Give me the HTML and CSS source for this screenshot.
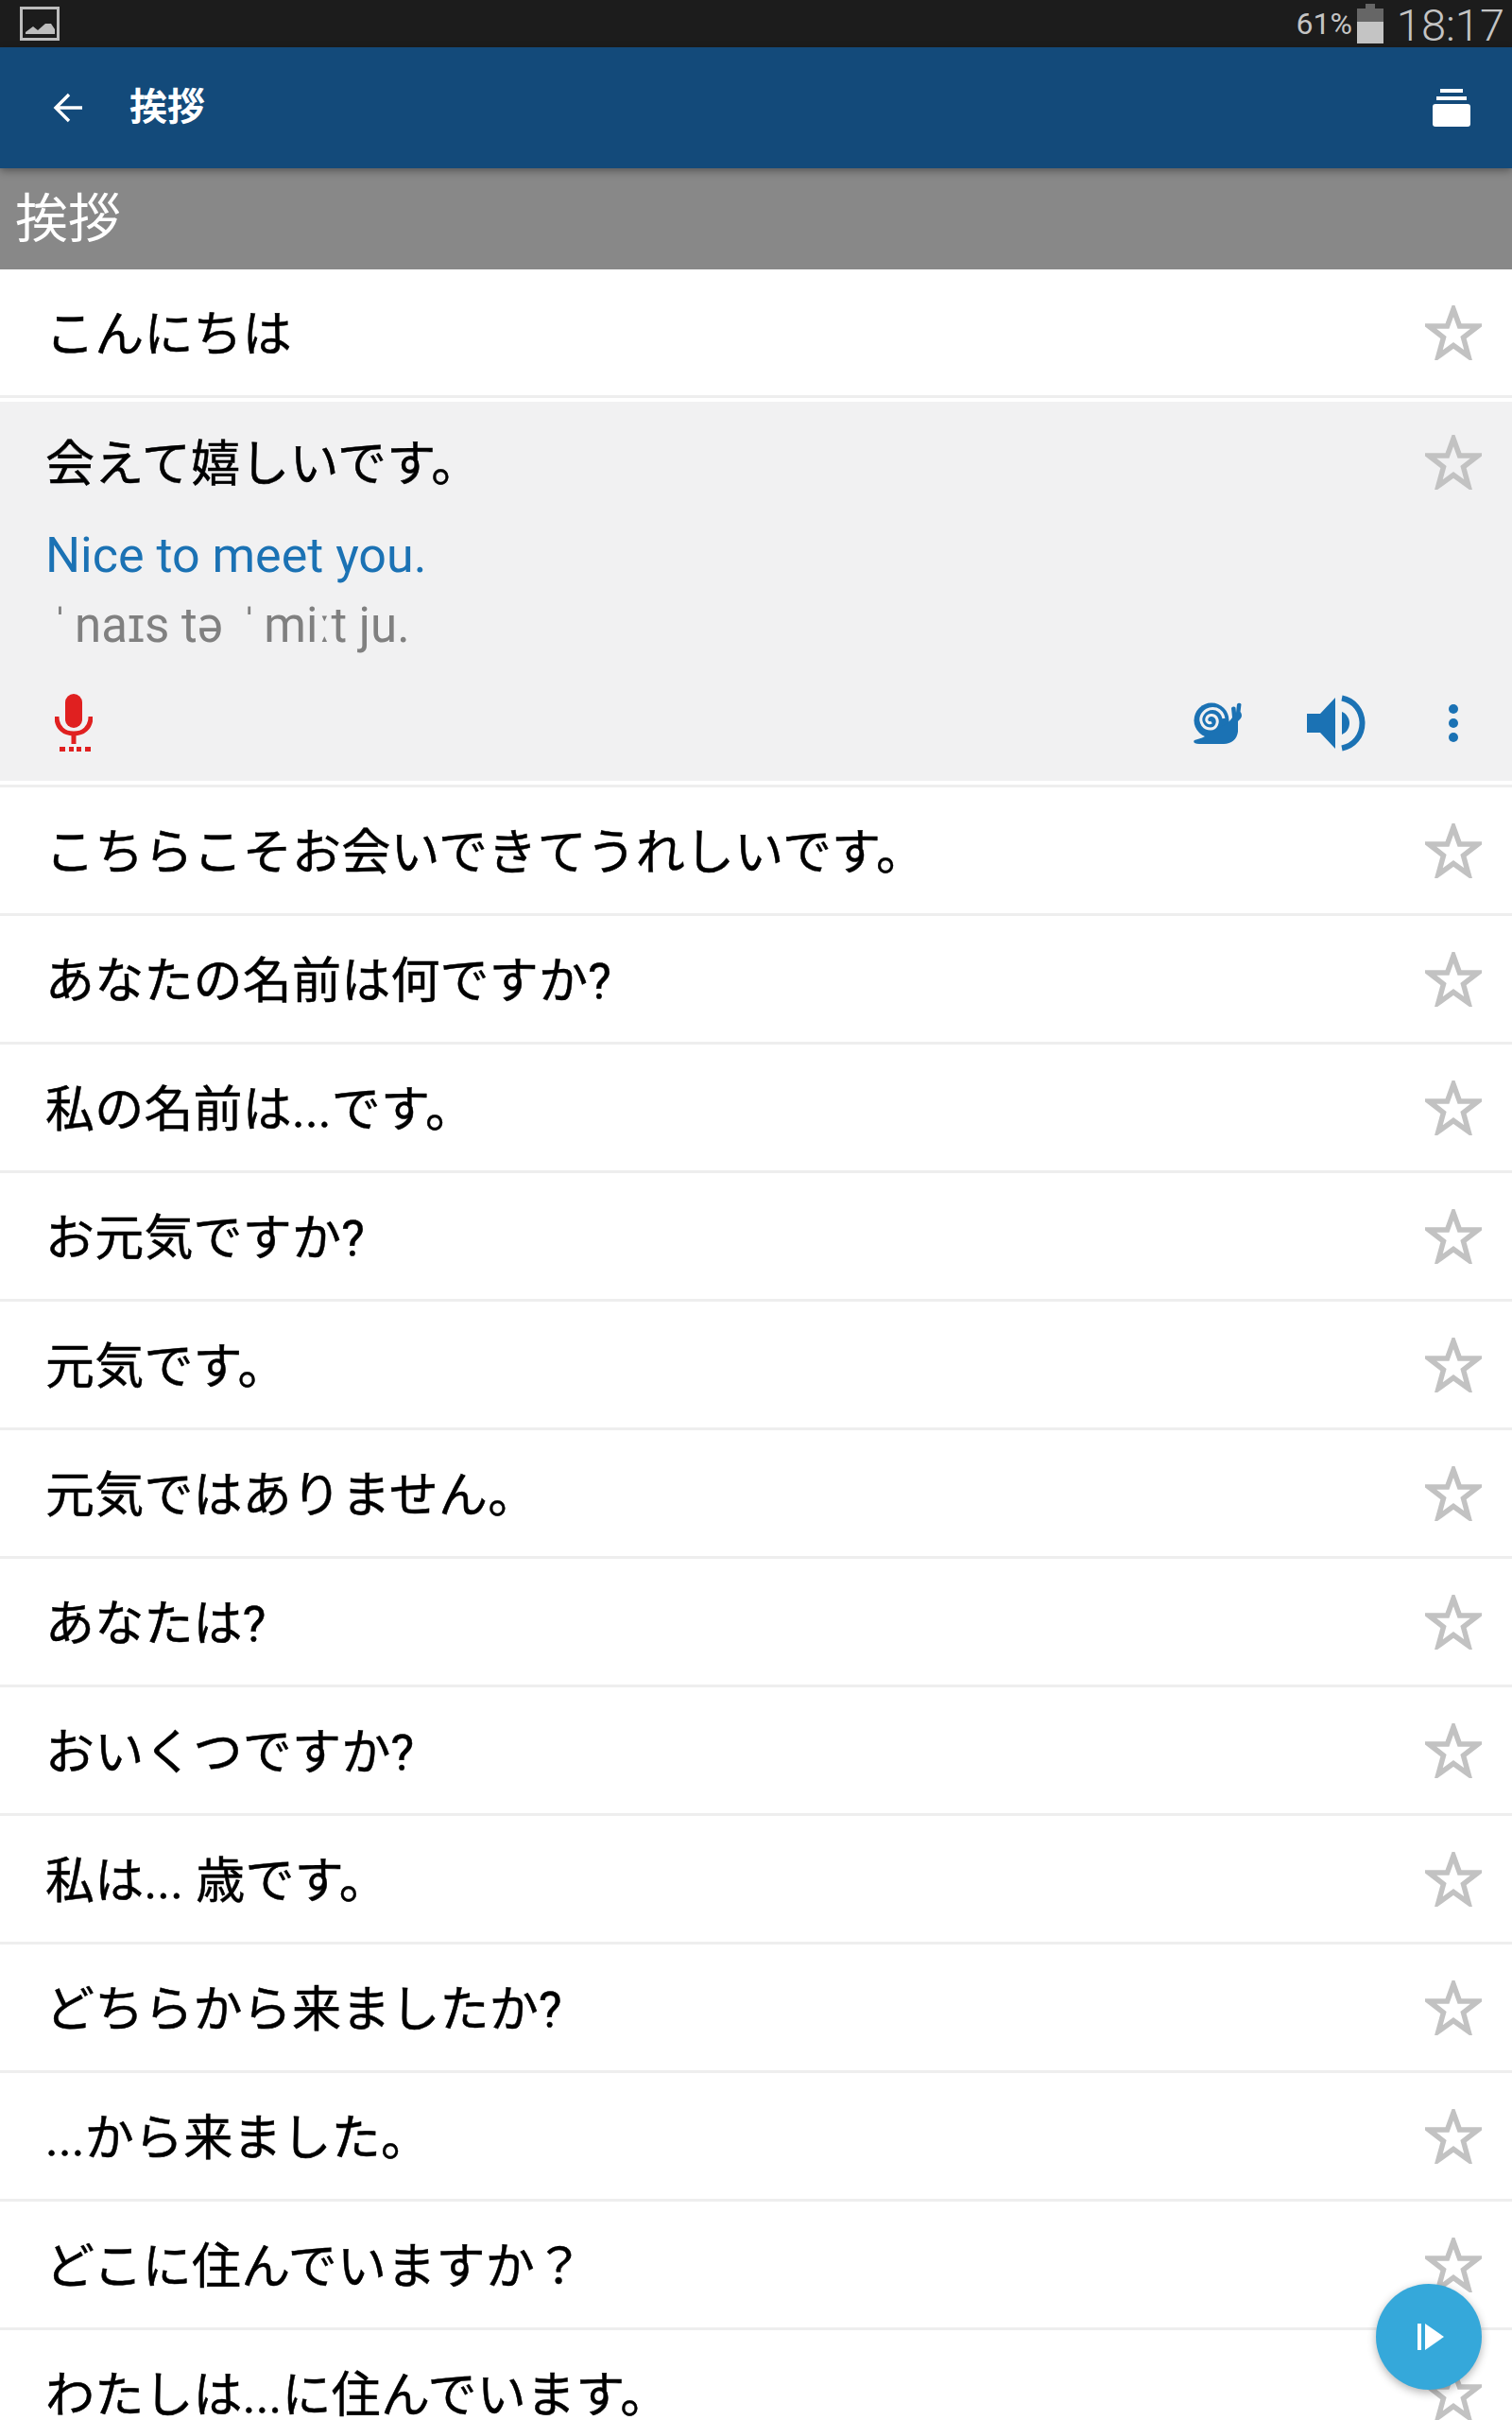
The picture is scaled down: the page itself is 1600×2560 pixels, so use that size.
FILE: index.html
```html
<!DOCTYPE html>
<html lang="ja">
<head>
    <meta charset="UTF-8">
    <meta name="viewport" content="width=device-width, initial-scale=1.0">
    <title>挨拶</title>
    <link rel="stylesheet" href="styles.css">
</head>
<body>
    <div class="screen">
        <div class="status-bar">
            <svg class="status-picture" width="42" height="36" viewBox="0 0 42 36">
                <rect x="1.5" y="1.5" width="39" height="33" fill="none" stroke="#bdbdbd" stroke-width="3"/>
                <path d="M6 29 L6 27 L14 21 L19 25 L27 18 L33 18 L37 24 L37 29 Z" fill="#bdbdbd"/>
            </svg>
            <div class="status-right">
                <span class="status-percent">61%</span>
                <svg class="status-battery" width="28" height="42" viewBox="0 0 28 42">
                    <path d="M9 0 H19 V5 H28 V19 H0 V5 H9 Z" fill="#666"/>
                    <rect x="0" y="19" width="28" height="23" fill="#c4c4c4"/>
                </svg>
                <span class="status-time">18:17</span>
            </div>
        </div>

        <div class="app-bar">
            <svg class="back-icon" width="32" height="32" viewBox="0 0 32 32">
                <path d="M31 16 H3 M17 2 L3 16 L17 30" fill="none" stroke="#fff" stroke-width="3.4"/>
            </svg>
            <span class="app-title">挨拶</span>
            <svg class="stack-icon" width="40" height="40" viewBox="0 0 40 40">
                <rect x="8" y="0" width="24" height="4" fill="#fff"/>
                <rect x="4" y="8" width="32" height="4" fill="#fff"/>
                <rect x="0" y="16" width="40" height="24" rx="3" fill="#fff"/>
            </svg>
        </div>

        <div class="section-title">挨拶</div>

        <ul class="phrase-list">
            <li class="phrase"><span class="phrase-text">こんにちは</span><svg class="star" viewBox="0 0 60 58"><use href="#star"/></svg></li>
            <li class="phrase-open">
                <div class="phrase-panel">
                    <div class="phrase-head"><span class="phrase-text">会えて嬉しいです。</span><svg class="star" viewBox="0 0 60 58"><use href="#star"/></svg></div>
                    <div class="translation">Nice to meet you.</div>
                    <div class="phonetic"><span class="stress">ˈ</span>naɪs tə <span class="stress">ˈ</span>miːt ju.</div>
                    <div class="actions">
                        <svg class="mic-icon" width="40" height="62" viewBox="0 0 40 62">
                            <rect x="11" y="0" width="18" height="36" rx="9" fill="#e02020"/>
                            <path d="M2 24 C2 36 10 42 20 42 C30 42 38 36 38 24" fill="none" stroke="#e02020" stroke-width="5"/>
                            <rect x="17.5" y="42" width="5" height="11" fill="#e02020"/>
                            <path d="M5 56 h6 v5 h-6 Z M15 56 h5 v5 h-5 Z M23 56 h5 v5 h-5 Z M32 56 h6 v5 h-6 Z" fill="#e02020"/>
                        </svg>
                        <div class="action-right">
                            <svg class="snail-icon" width="52" height="46" viewBox="0 0 52 46">
                                <circle cx="19" cy="20" r="18.500" fill="#1b72b4"/>
                                <path d="M1 41 C5 40 9 39 12 37 L34 24 C37 22 39 20 41 17 L40 7 A2.800 2.800 0 0 1 44.500 6.500 L45 12 L46 3 A2.800 2.800 0 0 1 50.500 3 L49.500 11 C51.500 13 51.500 17 49 19 L47 21 L47 32 C46 40 40 45 32 45 L6 45 C1 45 -1 43 1 41 Z" fill="#1b72b4"/>
                                <path d="M19 22 C16 24 13 21 14 18 C15 14 21 13 24 17 C27 22 24 29 18 29 C11 29 7 23 8 17 C10 10 17 6 24 8 C29 10 31 13 32 18" fill="none" stroke="#f1f1f2" stroke-width="3"/>
                            </svg>
                            <svg class="speaker-icon" width="62" height="60" viewBox="0 0 62 60">
                                <path d="M0 20 H14 L30 3 V57 L14 40 H0 Z" fill="#1b72b4"/>
                                <path d="M37 18 C42 20 45 25 45 30 C45 35 42 40 37 42 Z" fill="#1b72b4"/>
                                <path d="M37 3.500 C50 6 58.500 17 58.500 30 C58.500 43 50 54 37 56.500" fill="none" stroke="#1b72b4" stroke-width="6"/>
                            </svg>
                            <svg class="more-icon" width="10" height="40" viewBox="0 0 10 40">
                                <circle cx="5" cy="5" r="5" fill="#1b72b4"/>
                                <circle cx="5" cy="20" r="5" fill="#1b72b4"/>
                                <circle cx="5" cy="35" r="5" fill="#1b72b4"/>
                            </svg>
                        </div>
                    </div>
                </div>
            </li>
            <li class="phrase"><span class="phrase-text">こちらこそお会いできてうれしいです。</span><svg class="star" viewBox="0 0 60 58"><use href="#star"/></svg></li>
            <li class="phrase"><span class="phrase-text">あなたの名前は何ですか?</span><svg class="star" viewBox="0 0 60 58"><use href="#star"/></svg></li>
            <li class="phrase"><span class="phrase-text">私の名前は...です。</span><svg class="star" viewBox="0 0 60 58"><use href="#star"/></svg></li>
            <li class="phrase"><span class="phrase-text">お元気ですか?</span><svg class="star" viewBox="0 0 60 58"><use href="#star"/></svg></li>
            <li class="phrase"><span class="phrase-text">元気です。</span><svg class="star" viewBox="0 0 60 58"><use href="#star"/></svg></li>
            <li class="phrase"><span class="phrase-text">元気ではありません。</span><svg class="star" viewBox="0 0 60 58"><use href="#star"/></svg></li>
            <li class="phrase"><span class="phrase-text">あなたは?</span><svg class="star" viewBox="0 0 60 58"><use href="#star"/></svg></li>
            <li class="phrase"><span class="phrase-text">おいくつですか?</span><svg class="star" viewBox="0 0 60 58"><use href="#star"/></svg></li>
            <li class="phrase"><span class="phrase-text">私は... 歳です。</span><svg class="star" viewBox="0 0 60 58"><use href="#star"/></svg></li>
            <li class="phrase"><span class="phrase-text">どちらから来ましたか?</span><svg class="star" viewBox="0 0 60 58"><use href="#star"/></svg></li>
            <li class="phrase"><span class="phrase-text">...から来ました。</span><svg class="star" viewBox="0 0 60 58"><use href="#star"/></svg></li>
            <li class="phrase"><span class="phrase-text">どこに住んでいますか？</span><svg class="star" viewBox="0 0 60 58"><use href="#star"/></svg></li>
            <li class="phrase"><span class="phrase-text">わたしは...に住んでいます。</span><svg class="star" viewBox="0 0 60 58"><use href="#star"/></svg></li>
        </ul>

        <button class="play-fab">
            <svg width="30" height="30" viewBox="0 0 30 30">
                <rect x="1" y="1" width="4" height="28" fill="#fff"/>
                <path d="M9 1 L29 15 L9 29 Z" fill="#fff"/>
            </svg>
        </button>
    </div>

    <svg class="defs" width="0" height="0">
        <defs>
            <path id="star" d="M30 4 L36.500 22 L56 22 L40.500 34 L46 54 L30 42.500 L14 54 L19.500 34 L4 22 L23.500 22 Z" fill="none" stroke="#c2c2c2" stroke-width="5.500"/>
        </defs>
    </svg>
</body>
</html>
```

FILE: styles.css
```css
body {
    margin: 0;
    background-color: #fff;
    font-family: "Roboto", "Noto Sans CJK JP", sans-serif;
}
.screen {
    position: relative;
    width: 1600px;
    height: 2560px;
    overflow: hidden;
}
.defs {
    position: absolute;
}

/* Status bar */
.status-bar {
    display: flex;
    align-items: center;
    justify-content: space-between;
    height: 50px;
    padding: 0 8px 0 21px;
    box-sizing: border-box;
    background-color: #1c1c1c;
}
.status-right {
    display: flex;
    align-items: center;
    color: #c4c4c4;
}
.status-percent {
    font-size: 32px;
    line-height: 1;
    margin-right: 5px;
}
.status-time {
    margin-top: 2px;
    margin-left: 14px;
    font-size: 47px;
    font-weight: 300;
    line-height: 1;
}

/* App bar */
.app-bar {
    position: relative;
    z-index: 1;
    display: flex;
    align-items: center;
    height: 128px;
    padding: 0 44px 0 56px;
    box-sizing: border-box;
    background-color: #134a7a;
    box-shadow: 0 3px 8px rgba(0, 0, 0, 0.35);
}
.app-title {
    flex: 1;
    margin-left: 49px;
    color: #fff;
    font-size: 40px;
    font-weight: 700;
    line-height: 1;
}
.section-title {
    height: 107px;
    padding-left: 16px;
    box-sizing: border-box;
    background-color: #888;
    color: #fff;
    font-size: 56px;
    line-height: 108px;
}

/* Phrase list */
.phrase-list {
    margin: 0;
    padding: 0;
    list-style: none;
}
.phrase {
    display: flex;
    align-items: center;
    justify-content: space-between;
    height: 136px;
    padding: 0 32px 0 48px;
    box-sizing: border-box;
    border-bottom: 3px solid #eee;
}
.phrase-text {
    padding-top: 6px;
    color: #000;
    font-size: 52px;
    line-height: 1;
    letter-spacing: 0.2px;
    -webkit-text-stroke: 0.5px #000;
}
.star {
    width: 60px;
    height: 58px;
}
.phrase-open {
    padding: 4px 0;
    border-bottom: 3px solid #eee;
}
.phrase-panel {
    height: 401px;
    background-color: #f1f1f2;
}
.phrase-head {
    display: flex;
    align-items: center;
    justify-content: space-between;
    height: 130px;
    padding: 0 32px 0 48px;
}
.phrase-head .phrase-text {
    padding-top: 3px;
}
.phrase-head .star {
    margin-bottom: 2px;
}
.translation {
    height: 68px;
    padding-left: 48px;
    color: #1b72b4;
    font-size: 52px;
    line-height: 66px;
}
.phonetic {
    height: 76px;
    padding-left: 48px;
    color: #808080;
    font-size: 51px;
    line-height: 78px;
}
.stress {
    margin: 0 7px;
}
.actions {
    display: flex;
    align-items: center;
    justify-content: space-between;
    height: 127px;
    padding: 4px 57px 0 58px;
    box-sizing: border-box;
}
.action-right {
    display: flex;
    align-items: center;
    gap: 68px;
}
.more-icon {
    margin-left: 20px;
}

/* Floating play button */
.play-fab {
    position: absolute;
    left: 1456px;
    top: 2416px;
    display: flex;
    align-items: center;
    justify-content: center;
    width: 112px;
    height: 112px;
    padding: 0 0 0 4px;
    border: none;
    border-radius: 50%;
    background-color: #35a8da;
    box-shadow: 0 3px 10px rgba(0, 0, 0, 0.3);
}
```
